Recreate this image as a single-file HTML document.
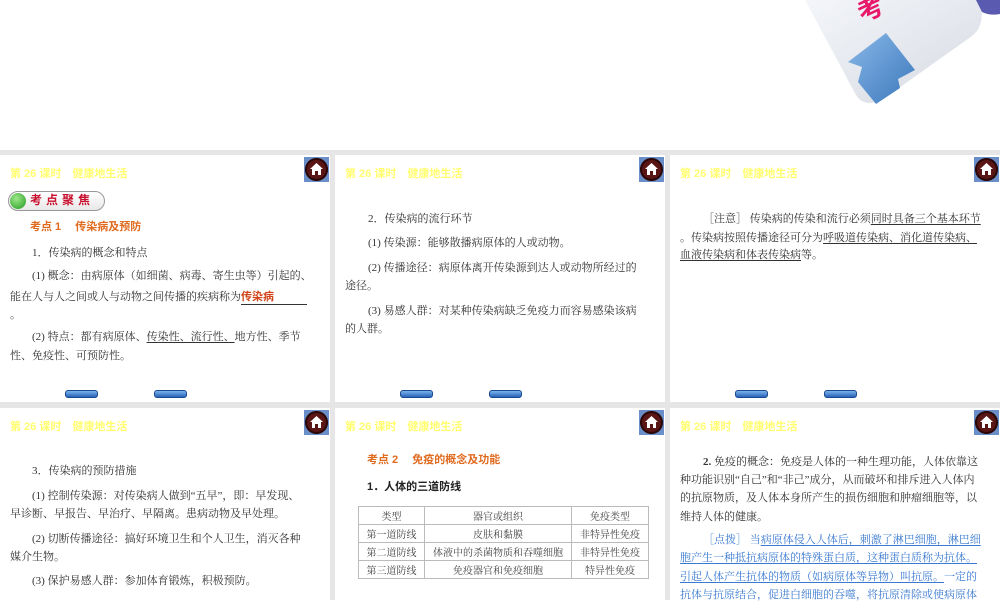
<!DOCTYPE html>
<html><head><meta charset="utf-8"><style>
*{margin:0;padding:0;box-sizing:border-box}
body{width:1000px;height:600px;overflow:hidden;background:#fff;position:relative;font-family:"Liberation Serif","Noto Serif CJK SC",serif;font-size:11px;color:#333}
.bg{position:absolute;left:0;top:150px;width:1000px;height:450px;background:#e6e6e6}
.p{position:absolute;background:#fff;overflow:hidden}
.l{position:absolute;white-space:nowrap;line-height:14px}
.h{position:absolute;left:10px;top:165px;font-family:"Liberation Sans","Noto Sans CJK SC",sans-serif;font-weight:bold;color:#ffff70;font-size:11px;white-space:nowrap}
.home{position:absolute;width:25px;height:25px;background:#6a8fc8}
.home:before{content:"";position:absolute;left:1px;top:1px;width:23px;height:23px;border-radius:50%;background:#5a1515;box-shadow:inset 0 0 0 2px #2a0808}
.home svg{position:absolute;left:6px;top:6px}
.nav{position:absolute;width:33px;height:8px;border-radius:3px;background:linear-gradient(#7ab4ee,#2a62b8);border:1px solid #1a4a90}
.o{color:#e06a1e;font-family:"Liberation Sans","Noto Sans CJK SC",sans-serif;font-weight:bold}
u{text-decoration:underline;text-underline-offset:2px}
.bl{color:#3a7ad0}
table{position:absolute;border-collapse:collapse;font-size:10px;color:#444}
td{border:1px solid #bbb;height:18px;text-align:center;padding:0}
</style></head><body>
<svg style="position:absolute;left:800px;top:0" width="200" height="120">
<defs><linearGradient id="g" x1="0" y1="0" x2="1" y2="1"><stop offset="0" stop-color="#f4f6fa"/><stop offset="1" stop-color="#d6dae2"/></linearGradient>
<linearGradient id="a" x1="0" y1="0" x2="1" y2="1"><stop offset="0" stop-color="#8ab8e8"/><stop offset="1" stop-color="#3a78bc"/></linearGradient></defs>
<path d="M5 0 L180 0 Q186 25 172 36 L82 100 Q64 108 56 95 Z" fill="url(#g)"/>
<path d="M176 0 L200 0 L200 14 Q190 16 182 12Z" fill="#5a5ab0"/>
<text x="58" y="18" font-family="Liberation Sans,Noto Sans CJK SC,sans-serif" font-weight="bold" font-size="26" fill="#e8186a" transform="rotate(-25 70 10)">考</text>
<path d="M86 33 L48 62 L62 67 L58 82 L76 104 L100 88 L98 79 L115 70 Z" fill="url(#a)"/>
</svg>
<div class="bg"></div>

<div class="p" style="left:0;top:155px;width:330px;height:247px"></div>
<div class="p" style="left:335px;top:155px;width:330px;height:247px"></div>
<div class="p" style="left:670px;top:155px;width:330px;height:247px"></div>
<div class="p" style="left:0;top:408px;width:330px;height:192px"></div>
<div class="p" style="left:335px;top:408px;width:330px;height:192px"></div>
<div class="p" style="left:670px;top:408px;width:330px;height:192px"></div>

<div class="h">第 26 课时　健康地生活</div>
<div class="h" style="left:345px">第 26 课时　健康地生活</div>
<div class="h" style="left:680px">第 26 课时　健康地生活</div>
<div class="h" style="top:418px">第 26 课时　健康地生活</div>
<div class="h" style="left:345px;top:418px">第 26 课时　健康地生活</div>
<div class="h" style="left:680px;top:418px">第 26 课时　健康地生活</div>
<div class="home" style="left:304px;top:157px"><svg width="13" height="12"><path d="M6.5 0 L13 6 L11 6 L11 12 L8 12 L8 8 L5 8 L5 12 L2 12 L2 6 L0 6Z" fill="#fff"/></svg></div>
<div class="home" style="left:639px;top:157px"><svg width="13" height="12"><path d="M6.5 0 L13 6 L11 6 L11 12 L8 12 L8 8 L5 8 L5 12 L2 12 L2 6 L0 6Z" fill="#fff"/></svg></div>
<div class="home" style="left:974px;top:157px"><svg width="13" height="12"><path d="M6.5 0 L13 6 L11 6 L11 12 L8 12 L8 8 L5 8 L5 12 L2 12 L2 6 L0 6Z" fill="#fff"/></svg></div>
<div class="home" style="left:304px;top:410px"><svg width="13" height="12"><path d="M6.5 0 L13 6 L11 6 L11 12 L8 12 L8 8 L5 8 L5 12 L2 12 L2 6 L0 6Z" fill="#fff"/></svg></div>
<div class="home" style="left:639px;top:410px"><svg width="13" height="12"><path d="M6.5 0 L13 6 L11 6 L11 12 L8 12 L8 8 L5 8 L5 12 L2 12 L2 6 L0 6Z" fill="#fff"/></svg></div>
<div class="home" style="left:974px;top:410px"><svg width="13" height="12"><path d="M6.5 0 L13 6 L11 6 L11 12 L8 12 L8 8 L5 8 L5 12 L2 12 L2 6 L0 6Z" fill="#fff"/></svg></div>

<div class="nav" style="left:65px;top:390px"></div><div class="nav" style="left:154px;top:390px"></div>
<div class="nav" style="left:400px;top:390px"></div><div class="nav" style="left:489px;top:390px"></div>
<div class="nav" style="left:735px;top:390px"></div><div class="nav" style="left:824px;top:390px"></div>

<div style="position:absolute;left:8px;top:191px;width:97px;height:20px;border:1px solid #999;border-radius:10px;background:linear-gradient(#fff,#e8e8e8)"></div>
<div style="position:absolute;left:10px;top:193px;width:16px;height:16px;border-radius:50%;background:radial-gradient(circle at 40% 35%,#9fe88a,#1f9a1f)"></div>
<div class="l" style="left:30px;top:193px;font-family:'Liberation Sans','Noto Sans CJK SC',sans-serif;font-weight:bold;color:#c8102e;font-size:12px;letter-spacing:4px">考点聚焦</div>
<div class="l o" style="left:30px;top:220px">考点 1　 传染病及预防</div>
<div class="l" style="left:32px;top:246px">1．传染病的概念和特点</div>
<div class="l" style="left:32px;top:269px">(1) 概念：由病原体（如细菌、病毒、寄生虫等）引起的、</div>
<div class="l" style="left:10px;top:290px">能在人与人之间或人与动物之间传播的疾病称为<span class="o" style="display:inline-block;width:66px;border-bottom:1px solid #333;color:#d0441a">传染病</span></div>
<div class="l" style="left:10px;top:308px">。</div>
<div class="l" style="left:32px;top:330px">(2) 特点：都有病原体、<u>传染性、流行性、</u>地方性、季节</div>
<div class="l" style="left:10px;top:349px">性、免疫性、可预防性。</div>

<div class="l" style="left:368px;top:212px">2．传染病的流行环节</div>
<div class="l" style="left:368px;top:236px">(1) 传染源：能够散播病原体的人或动物。</div>
<div class="l" style="left:368px;top:261px">(2) 传播途径：病原体离开传染源到达人或动物所经过的</div>
<div class="l" style="left:345px;top:279px">途径。</div>
<div class="l" style="left:368px;top:304px">(3) 易感人群：对某种传染病缺乏免疫力而容易感染该病</div>
<div class="l" style="left:345px;top:322px">的人群。</div>

<div class="l" style="left:703px;top:212px">［注意］ 传染病的传染和流行必须<u>同时具备三个基本环节</u></div>
<div class="l" style="left:680px;top:231px">。传染病按照传播途径可分为<u>呼吸道传染病、消化道传染病、</u></div>
<div class="l" style="left:680px;top:248px"><u>血液传染病和体表传染病</u>等。</div>

<div class="l" style="left:32px;top:464px">3．传染病的预防措施</div>
<div class="l" style="left:32px;top:489px">(1) 控制传染源：对传染病人做到“五早”，即：早发现、</div>
<div class="l" style="left:10px;top:507px">早诊断、早报告、早治疗、早隔离。患病动物及早处理。</div>
<div class="l" style="left:32px;top:532px">(2) 切断传播途径：搞好环境卫生和个人卫生，消灭各种</div>
<div class="l" style="left:10px;top:550px">媒介生物。</div>
<div class="l" style="left:32px;top:574px">(3) 保护易感人群：参加体育锻炼，积极预防。</div>

<div class="l o" style="left:367px;top:453px">考点 2　 免疫的概念及功能</div>
<div class="l" style="left:367px;top:480px;font-weight:bold;font-family:'Liberation Sans','Noto Sans CJK SC',sans-serif;color:#222">1．人体的三道防线</div>
<table style="left:358px;top:506px;width:291px">
<tr><td style="width:66px">类型</td><td style="width:147px">器官或组织</td><td>免疫类型</td></tr>
<tr><td>第一道防线</td><td>皮肤和黏膜</td><td>非特异性免疫</td></tr>
<tr><td>第二道防线</td><td>体液中的杀菌物质和吞噬细胞</td><td>非特异性免疫</td></tr>
<tr><td>第三道防线</td><td>免疫器官和免疫细胞</td><td>特异性免疫</td></tr>
</table>

<div class="l" style="left:703px;top:455px"><b>2.</b> 免疫的概念：免疫是人体的一种生理功能，人体依靠这</div>
<div class="l" style="left:680px;top:473px">种功能识别“自己”和“非己”成分，从而破坏和排斥进入人体内</div>
<div class="l" style="left:680px;top:491px">的抗原物质，及人体本身所产生的损伤细胞和肿瘤细胞等，以</div>
<div class="l" style="left:680px;top:510px">维持人体的健康。</div>
<div class="l bl" style="left:703px;top:533px">［点拨］ 当<u>病原体侵入人体后，刺激了淋巴细胞，淋巴细</u></div>
<div class="l bl" style="left:680px;top:551px"><u>胞产生一种抵抗病原体的特殊蛋白质，这种蛋白质称为抗体。</u></div>
<div class="l bl" style="left:680px;top:570px"><u>引起人体产生抗体的物质（如病原体等异物）叫抗原。</u>一定的</div>
<div class="l bl" style="left:680px;top:588px">抗体与抗原结合，促进白细胞的吞噬，将抗原清除或使病原体</div>
</body></html>
